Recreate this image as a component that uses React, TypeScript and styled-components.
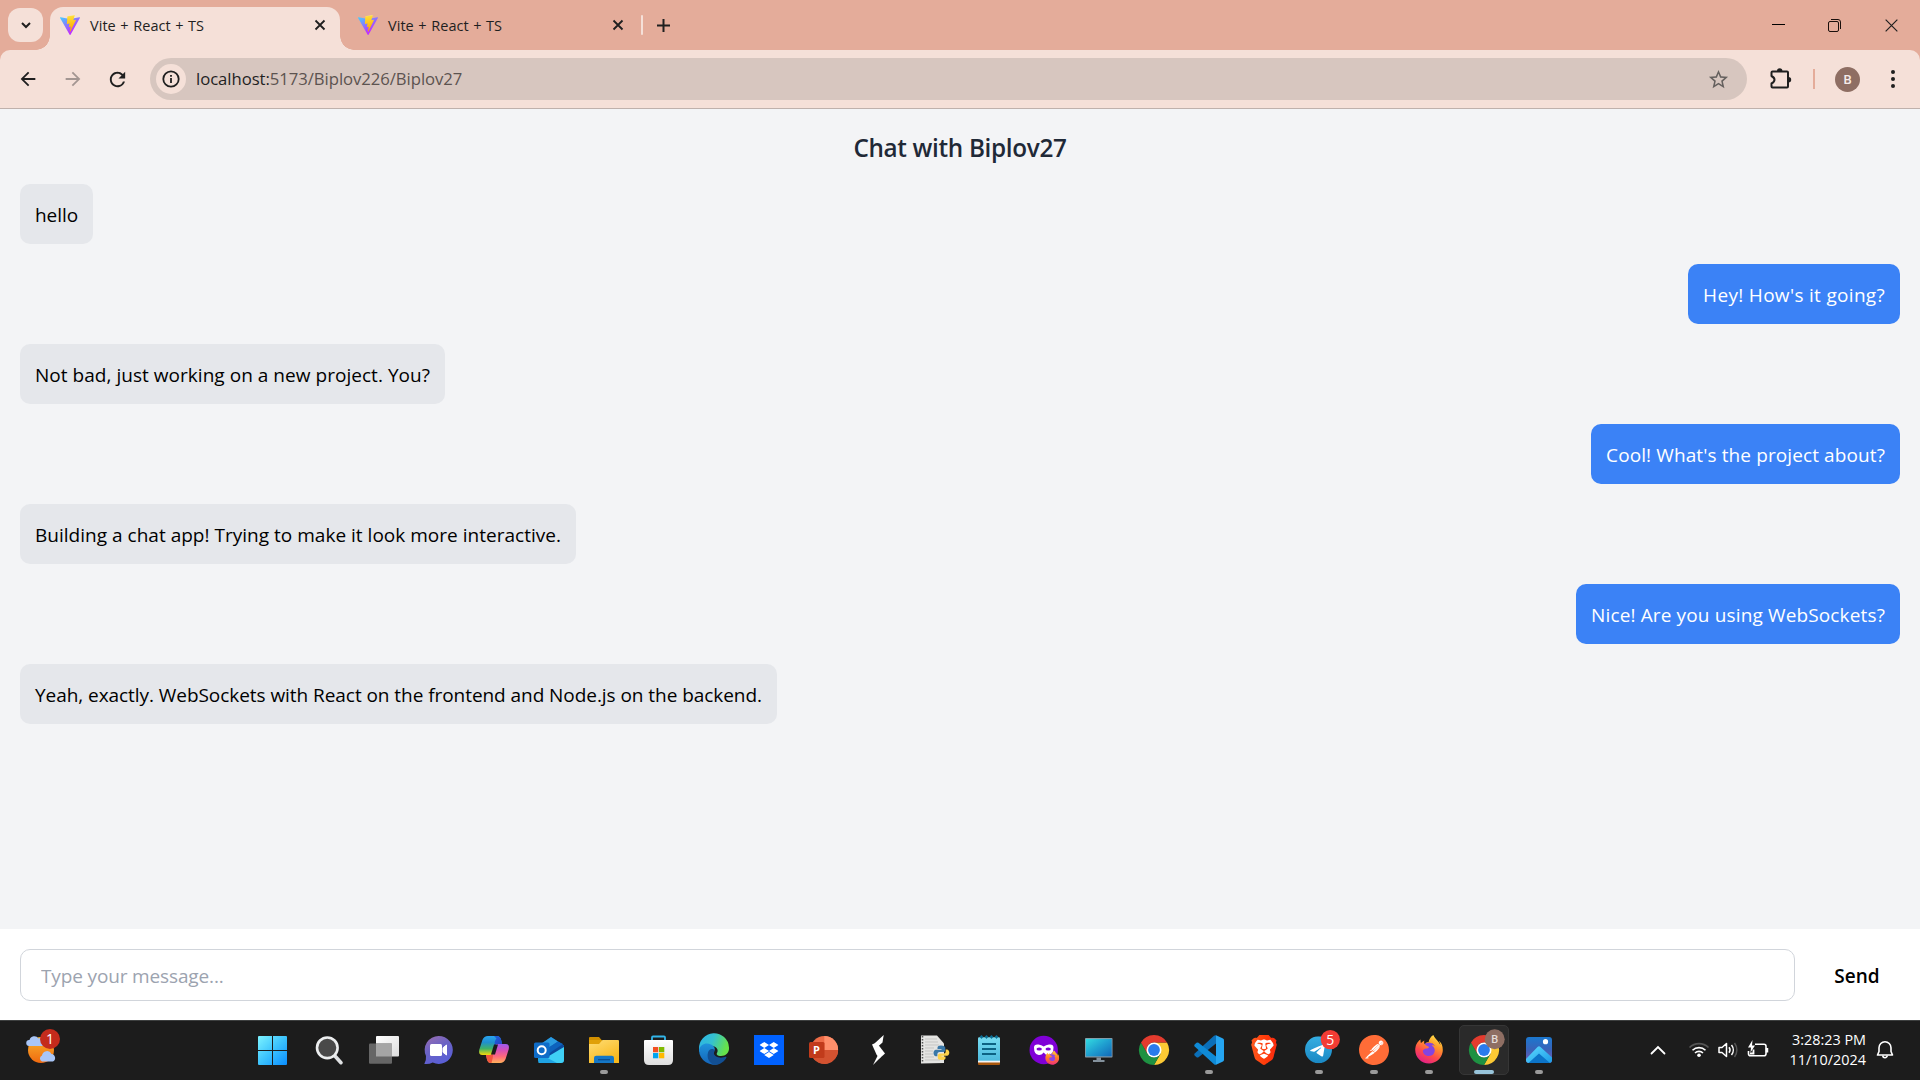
import React from 'react';
import styled, { createGlobalStyle } from 'styled-components';
import { MdArrowBack, MdArrowForward, MdRefresh, MdStarBorder } from 'react-icons/md';
import { FaDropbox, FaFirefoxBrowser } from 'react-icons/fa';
import { SiBrave, SiPostman, SiTelegram } from 'react-icons/si';

const Global = createGlobalStyle`
  * { box-sizing: border-box; }
  body { margin: 0; overflow: hidden; font-family: "Open Sans", "Noto Sans", sans-serif; }
  button, input { font: inherit; }
`;

const Screen = styled.div`
  display: flex;
  flex-direction: column;
  width: 1920px;
  height: 1080px;
  background: #e4ac9a;
`;

/* ---------- browser frame ---------- */

const TabStrip = styled.div`
  display: flex;
  height: 50px;
  padding-left: 8px;
`;

const IconButton = styled.button<{ $w: number; $color?: string }>`
  display: flex;
  align-items: center;
  justify-content: center;
  flex: none;
  width: ${p => p.$w}px;
  height: 100%;
  padding: 0;
  border: 0;
  background: none;
  color: ${p => p.$color ?? '#1f1f1f'};
`;

const TabSearch = styled(IconButton)`
  height: 34px;
  margin: 8px 7px 0 0;
  border-radius: 12px;
  background: #f5e0d8;
`;

const Tab = styled.div<{ $active?: boolean }>`
  position: relative;
  display: flex;
  align-items: center;
  width: ${p => (p.$active ? 290 : 301)}px;
  height: 43px;
  margin-top: 7px;
  padding: 0 ${p => (p.$active ? 10 : 13)}px 7px ${p => (p.$active ? 10 : 18)}px;
  border-radius: 13px 13px 0 0;
  background: ${p => (p.$active ? '#f5e0d8' : 'none')};
  &::before, &::after {
    content: ${p => (p.$active ? "''" : 'none')};
    position: absolute;
    bottom: 0;
    width: 14px;
    height: 14px;
  }
  &::before {
    left: -14px;
    background: radial-gradient(circle at 0 0, transparent 13.5px, #f5e0d8 14px);
  }
  &::after {
    right: -14px;
    background: radial-gradient(circle at 100% 0, transparent 13.5px, #f5e0d8 14px);
  }
`;

const TabTitle = styled.span`
  flex: 1;
  margin-left: 10px;
  padding-top: 1px;
  font-size: 14.5px;
  line-height: 20px;
  letter-spacing: 0.05px;
  word-spacing: 0.7px;
  white-space: nowrap;
  color: #1f1f1f;
`;

const TabDivider = styled.span`
  width: 2px;
  height: 20px;
  margin-top: 15px;
  border-radius: 1px;
  background: #f5e0d8;
`;

const WindowControls = styled.div`
  display: flex;
  margin-left: auto;
`;

const Toolbar = styled.div`
  display: flex;
  align-items: center;
  height: 59px;
  border-bottom: 1px solid #bfb1ac;
  border-radius: 10px 10px 0 0;
  background: #f5e0d8;
`;

const NavButtons = styled.div`
  display: flex;
  flex: none;
  height: 100%;
  width: 150px;
  padding-left: 5px;
`;

const AddressBar = styled.div`
  display: flex;
  align-items: center;
  flex: none;
  width: 1597px;
  height: 42px;
  padding: 0 14px 0 6px;
  border-radius: 21px;
  background: #d7c6bf;
`;

const SiteInfo = styled.span`
  display: flex;
  align-items: center;
  justify-content: center;
  width: 30px;
  height: 30px;
  border-radius: 50%;
  background: #f5e0d8;
`;

const Url = styled.span`
  flex: 1;
  margin-left: 10px;
  font-size: 16.7px;
  line-height: 24px;
  letter-spacing: -0.05px;
  color: #5c5350;
`;

const Host = styled.span`
  color: #1f1f1f;
`;

const ToolbarDivider = styled.span`
  flex: none;
  width: 2px;
  height: 20px;
  margin-right: 20px;
  background: #e4ac9a;
`;

const Avatar = styled.span`
  display: flex;
  align-items: center;
  justify-content: center;
  flex: none;
  width: 25px;
  height: 25px;
  margin-right: 5px;
  border-radius: 50%;
  background: #8e6e63;
  color: #f5ece9;
  font: 500 13px Roboto, sans-serif;
`;

/* ---------- chat page ---------- */

const ChatPage = styled.main`
  display: flex;
  flex-direction: column;
  height: 911px;
  background: #f3f4f6;
`;

const ChatTitle = styled.h2`
  margin: 20px 0 0;
  font-size: 24.3px;
  font-weight: 600;
  line-height: 38px;
  letter-spacing: -0.33px;
  text-align: center;
  color: #1f2937;
`;

const MessageList = styled.div`
  display: flex;
  flex: 1;
  flex-direction: column;
  gap: 20px;
  padding: 17px 20px 0;
`;

const Bubble = styled.div<{ $mine: boolean; $track: number }>`
  align-self: ${p => (p.$mine ? 'flex-end' : 'flex-start')};
  height: 60px;
  padding: 16px 15px 14px;
  border-radius: 10px;
  font-size: 19px;
  line-height: 30px;
  letter-spacing: ${p => p.$track}px;
  white-space: nowrap;
  color: ${p => (p.$mine ? '#fff' : '#000')};
  background: ${p => (p.$mine ? '#3b82f6' : '#e5e7eb')};
`;

const Composer = styled.form`
  display: flex;
  align-items: center;
  height: 91px;
  padding: 0 20px 0;
  background: #fff;
`;

const MessageInput = styled.input`
  width: 1775px;
  height: 52px;
  padding: 2px 20px 0;
  border: 1px solid #d1d5db;
  border-radius: 10px;
  font-size: 19px;
  letter-spacing: -0.14px;
  background: #fff;
  &::placeholder { color: #9ca3af; opacity: 1; }
`;

const SendButton = styled.button`
  flex: 1;
  padding: 2px 0 0 19px;
  border: 0;
  background: none;
  font-size: 19px;
  font-weight: 600;
  color: #000;
`;

/* ---------- taskbar ---------- */

const TaskbarRoot = styled.footer`
  display: flex;
  height: 60px;
  border-top: 1px solid #3d3f3f;
  background: #1c1c1c;
`;

const Widgets = styled.div`
  width: 246.5px;
  padding: 6px 0 0 20px;
`;

const AppCell = styled.div`
  display: flex;
  justify-content: center;
  width: 55px;
  height: 59px;
`;

const AppTile = styled.div<{ $active?: boolean }>`
  display: flex;
  flex-direction: column;
  align-items: center;
  justify-content: space-between;
  width: 50px;
  height: 50px;
  margin-top: 4px;
  padding: 9px 0 0;
  border: 1px solid ${p => (p.$active ? '#363636' : 'transparent')};
  border-radius: 5px;
  background: ${p => (p.$active ? '#2a2a2a' : 'none')};
`;

const Indicator = styled.span<{ $active?: boolean }>`
  width: ${p => (p.$active ? 20 : 8)}px;
  height: 4px;
  border-radius: 2px;
  background: ${p => (p.$active ? '#98c4da' : '#9a9a9a')};
`;

const Glyph = styled.svg`
  display: block;
  overflow: visible;
`;

const Tray = styled.div`
  display: flex;
  align-items: center;
  margin-left: auto;
  padding: 0 25px 1px 0;
`;

const StatusIcons = styled.div`
  display: flex;
  gap: 8px;
  margin: 0 7px 0 16px;
`;

const Clock = styled.div`
  width: 90px;
  margin-right: 9px;
  text-align: right;
  font-size: 14.4px;
  line-height: 20px;
  white-space: nowrap;
  color: #fff;
`;

/* ---------- drawings ---------- */

const ViteLogo = () => (
  <Glyph width="20" height="20" viewBox="0 0 256 257">
    <defs>
      <linearGradient id="vite-a" x1="0" x2=".58" y1="0" y2=".8">
        <stop offset="0" stopColor="#41D1FF" /><stop offset="1" stopColor="#BD34FE" />
      </linearGradient>
      <linearGradient id="vite-b" x1=".43" x2=".5" y1=".02" y2=".9">
        <stop offset="0" stopColor="#FFEA83" /><stop offset=".08" stopColor="#FFDD35" /><stop offset="1" stopColor="#FFA800" />
      </linearGradient>
    </defs>
    <path fill="url(#vite-a)" d="M255.153 37.938L134.897 252.976c-2.483 4.44-8.862 4.466-11.382.048L.875 37.958c-2.746-4.814 1.371-10.646 6.827-9.67l120.385 21.517a6.537 6.537 0 0 0 2.322-.004l117.867-21.483c5.438-.991 9.574 4.796 6.877 9.62Z" />
    <path fill="url(#vite-b)" d="M185.432.063L96.44 17.501a3.268 3.268 0 0 0-2.634 3.014l-5.474 92.456a3.268 3.268 0 0 0 3.997 3.378l24.777-5.718c2.318-.535 4.413 1.507 3.936 3.838l-7.361 36.047c-.495 2.426 1.782 4.5 4.151 3.78l15.304-4.649c2.372-.72 4.652 1.36 4.15 3.788l-11.698 56.621c-.732 3.542 3.979 5.473 5.943 2.437l1.313-2.028l72.516-144.72c1.215-2.423-.88-5.186-3.54-4.672l-25.505 4.922c-2.396.462-4.435-1.77-3.759-4.114l16.646-57.705c.677-2.35-1.37-4.583-3.769-4.113Z" />
  </Glyph>
);

const Cross = ({ size = 10, width = 1.8 }) => (
  <Glyph width={size} height={size} viewBox="0 0 10 10">
    <path d="M.5 .5 9.5 9.5M9.5 .5 .5 9.5" stroke="#1f1f1f" strokeWidth={width} fill="none" />
  </Glyph>
);

const ChromeMark = () => (
  <>
    <path d="M15 7.5H28A15 15 0 0 1 15 30L21.5 18.8Z" fill="#fcc934" />
    <path d="M15 30A15 15 0 0 1 2 7.5L8.5 18.8Q11 22.5 15 22.5 19 22.5 21.5 18.8Z" fill="#1e9142" />
    <path d="M2 7.5A15 15 0 0 1 28 7.5H15Q10.5 7.5 8.5 11.3V18.8Z" fill="#e33b2e" />
    <circle cx="15" cy="15" r="7.5" fill="#fff" />
    <circle cx="15" cy="15" r="5.9" fill="#2a7bec" />
  </>
);

const Grad = ({ id, stops, x2 = '0', y2 = '1', x1 = '0', y1 = '0' }: { id: string; stops: string[]; x1?: string; y1?: string; x2?: string; y2?: string }) => (
  <linearGradient id={id} x1={x1} y1={y1} x2={x2} y2={y2}>
    {stops.map((c, i) => <stop key={i} offset={i / (stops.length - 1)} stopColor={c} />)}
  </linearGradient>
);

const badgeText = { textAnchor: 'middle' as const, fill: '#fff' };

const apps: { name: string; open?: boolean; active?: boolean; art: React.ReactNode }[] = [
  { name: 'Start', art: <>
    <Grad id="win" stops={['#7df3ff', '#3cc3fd', '#0a8dff']} x2="1" />
    <mask id="winm"><path fill="#fff" d="M-1 2q0-1 1-1h13v14H-1zM14 1h13q1 0 1 1v13H14zM-1 16h14v14H0q-1 0-1-1zM14 16h14v13q0 1-1 1H14z" /></mask>
    <rect x="-1" y="1" width="29" height="29" fill="url(#win)" mask="url(#winm)" /></> },
  { name: 'Search', art: <>
    <path d="M20.5 20.5 27 27.7" stroke="#dfe1e3" strokeWidth="3.6" strokeLinecap="round" />
    <circle cx="13.3" cy="12.8" r="10.3" fill="#494949" stroke="#eceeef" strokeWidth="2.6" /></> },
  { name: 'Task View', art: <>
    <Grad id="tv" stops={['#ffffff', '#dcdcdc']} x2="1" />
    <rect x="7" y="1" width="23" height="20.5" rx="1" fill="url(#tv)" />
    <rect x="0" y="8.5" width="23" height="20.3" rx="1" fill="#666" />
    <path d="M7 8.5h16v13H7z" fill="#a5a5a5" /></> },
  { name: 'Chat', art: <>
    <Grad id="chat" stops={['#9d6fb0', '#6b62c4', '#5a5fd6']} x2=".5" />
    <path d="M14.7 1a14 14 0 1 1-6 26.6Q5 29.5.3 29 2.5 25 2 21A14 14 0 0 1 14.7 1z" fill="url(#chat)" />
    <rect x="6" y="9" width="12" height="12" rx="1.5" fill="#fff" />
    <path d="M19 12.8 22.5 10v10L19 17.3z" fill="#fff" stroke="#fff" strokeLinejoin="round" /></> },
  { name: 'Copilot', art: <>
    <Grad id="cpa" stops={['#2aa4ef', '#1f8fd0', '#3fb266', '#f5d90a']} />
    <Grad id="cpb" stops={['#9d5bf0', '#d84fb5', '#ff6a7a', '#ffb25a']} />
    <Grad id="cpc" stops={['#1c62d8', '#2a3fc4']} x2="1" />
    <path d="M9 1h9q3 0 4 3.5L23 8.5h-4q-2.5 0-3.3 2.500L13 20H3.5Q-.8 20 .2 15L3.4 5Q5 1 9 1z" fill="url(#cpa)" />
    <path d="M15 1h3q3 0 4 3.5L23.2 9H19q-2.5 0-3.3 2.5Q15 6 17.5 3.5z" fill="url(#cpc)" />
    <path d="M21 28h-9q-3 0-4-3.5L7 20h4q2.5 0 3.3-2.5L17 9h9.500q4.300 0 3.300 5L26.600 24Q25 28 21 28z" fill="url(#cpb)" />
    <path d="M12 28q-3 0-4-3.5L7 20h4q2.5 0 3.3-2.5Q14 24 12.5 28z" fill="#f2553d" />
    <path d="M15 9.500h4L16 19.500h-4z" fill="#1c1c1c" /></> },
  { name: 'Outlook', art: <>
    <path d="M4 11 17 2 30 10.5V25q0 3-3 3H7q-3 0-3-3z" fill="#0f5fb0" />
    <path d="M4 11 17 2 24 6.5 8 17z" fill="#2a9be0" />
    <path d="M24 6.5 30 10.5V13L12 24z" fill="#0b4a9c" />
    <path d="M24 6.5 8 17v6l21-14z" fill="#0d62bd" />
    <path d="M7 28 4 27.500 30 12v13q0 3-3 3z" fill="#3fd0f5" />
    <path d="M4 18l19 10H7q-3 0-3-3z" fill="#1fa3e4" />
    <rect x="0" y="7.5" width="15.5" height="15.5" rx="1.5" fill="#0f6cc8" />
    <circle cx="7.7" cy="15.2" r="4" fill="none" stroke="#fff" strokeWidth="2" /></> },
  { name: 'File Explorer', open: true, art: <>
    <Grad id="fe" stops={['#ffdd75', '#f8b81c']} x2=".6" />
    <path d="M0 3q0-1 1-1h9l3 3.5H0z" fill="#d18f00" /><path d="M0 5h13v5H0z" fill="#e0a008" />
    <path d="M0 9h10l3.5-4H29q1 0 1 1v22H0z" fill="url(#fe)" />
    <path d="M5 28v-5q0-2.3 2.3-2.3h15.4Q25 20.7 25 23v5z" fill="#1577c6" />
    <path d="M9 24.7h12" stroke="#0b4f92" strokeWidth="1.3" /></> },
  { name: 'Store', art: <>
    <Grad id="ms" stops={['#fff', '#dedede']} />
    <path d="M8 6V2.5Q8 1.500 9 1.5h11q1 0 1 1V6" stroke="#32b6ea" strokeWidth="1.8" fill="none" />
    <path d="M0 6q0-1 1-1h27q1 0 1 1v19q0 5-5 5H5q-5 0-5-5z" fill="url(#ms)" />
    <path d="M9 12h5.3v5.3H9z" fill="#f25022" /><path d="M15 12h5.3v5.3H15z" fill="#7fba00" />
    <path d="M9 18h5.3v5.3H9z" fill="#00a4ef" /><path d="M15 18h5.3v5.3H15z" fill="#ffb900" /></> },
  { name: 'Edge', art: <>
    <Grad id="eg" stops={['#2bb3e8', '#35c1d0', '#66e24a']} x2="1" y2=".3" />
    <Grad id="eb" stops={['#1f93dc', '#1464b8']} />
    <path d="M0 14A15 15 0 0 1 30 12.5c.5 5-3.500 8.500-8 8.500-3.500 0-5-1.500-4-3 2-3-.5-7-5-7Q5 10.500 0 17z" fill="url(#eg)" />
    <path d="M0 15C1 9.5 7 7 12 9.5c3 1.500 4.500 4 3.500 6-3-2-6 1.500-4.500 6 1.500 4.500 6 7.500 10 7A15 15 0 0 1 0 15z" fill="url(#eb)" />
    <path d="M9 17.5c1-3 4-5 7-2-1.500 2-1.500 4 .5 5.500 3 2.200 7.500 2 10.500.5q1 .5 0 2C24 28 19 30 15.500 30 10 28 7.500 22.500 9 17.500z" fill="#124f93" /></> },
  { name: 'Dropbox', art: <>
    <rect width="30" height="30" fill="#0061ff" />
    <FaDropbox x={5.5} y={5.5} size={19} color="#fff" /></> },
  { name: 'PowerPoint', art: <>
    <circle cx="15.3" cy="14.8" r="13.8" fill="#ed6c47" />
    <path d="M15.3 1A13.8 13.8 0 0 1 29.1 15H15.3z" fill="#ff8f6b" />
    <path d="M29.1 15A13.8 13.8 0 0 1 3 21.5L15.3 15z" fill="#d35230" />
    <rect x="0" y="7" width="15.5" height="16" rx="1.5" fill="#c13b1b" />
    <text x="7.4" y="19" fontSize="11" fontWeight="700" fontFamily="Open Sans, sans-serif" {...badgeText}>P</text></> },
  { name: 'Bolt', art: <>
    <path d="M19.7 0 18.5 7.5 14 11.5 10.5 8.500z" fill="#fff" />
    <path d="M8 9.5 12.5 7.500 21 18.500 15.500 23.500 12.500 19.500z" fill="#fff" />
    <path d="M14 20 16.5 22.5 9 30z" fill="#fff" /></> },
  { name: 'Python', art: <>
    <path d="M2 .5h16l7 8V28L2 28.5z" fill="#e4e4e2" />
    <path d="M6 4h12M6 7h13M6 10h14M6 13h9M6 16h8M6 19h8M6 22h9M6 25h15" stroke="#c5c5c3" strokeWidth="1" />
    <path d="M3.5 1v27" stroke="#555" strokeWidth="1.5" strokeDasharray="1.5 1.5" />
    <path d="M22 10.5c-3 0-3.500 1-3.500 2.300V14H22.500v.8h-5.500c-1.500 0-2.500 1.300-2.500 3.300s1 3.200 2.300 3.200h1.600v-2c0-1.400 1-2.200 2.300-2.200h3.600c1.200 0 2-1 2-2v-2.300c0-1.300-1.300-2.300-4.300-2.300z" fill="#3a78a8" />
    <path d="M23 25c3 0 3.500-1 3.500-2.300v-1.200h-4v-.8H28c1.500 0 2.300-1.200 2.300-3.100s-1-3.200-2.300-3.200h-1.300v2c0 1.400-1 2.200-2.300 2.200h-3.600c-1.200 0-2 1-2 2v2.100c0 1.300 1.200 2.300 4.200 2.300z" fill="#fdd24b" /></> },
  { name: 'Notepad', art: <>
    <Grad id="np" stops={['#77dcf2', '#4bb8dc']} />
    <path d="M4 3.5q0-1.200 1.200-1.200h19.600Q26 2.300 26 3.500V27H4z" fill="url(#np)" />
    <path d="M4 26.5h22V29q0 1-1 1H5q-1 0-1-1z" fill="#a9570c" /><path d="M4 25.7h22v1.8H4z" fill="#f3f3f3" />
    {[7.5, 12.5, 17.5, 22.5].map(x => <path key={x} d={`M${x - 1.8} 1.8 ${x} 0 ${x + 1.8} 1.8 ${x} 4z`} fill="#0c6e94" />)}
    <path d="M8 9h14M8 14h14M8 19h14" stroke="#0c6283" strokeWidth="1.8" /></> },
  { name: 'Firefox Private', art: <>
    <Grad id="fp" stops={['#ffd43a', '#ff7a2a', '#f0307a']} />
    <circle cx="14.7" cy="15" r="14.2" fill="#8000d7" />
    <path d="M5 12.5Q5 9 9.5 9.500q3 .3 5.200 2 2.300-1.700 5.300-2 4.500-.5 4.500 3 0 7-5 7.500-3 .2-4.800-2.500Q12.500 20.200 9.800 20 5 19.500 5 12.500z" fill="#fff" />
    <ellipse cx="10.2" cy="14" rx="2.7" ry="1.6" fill="#8000d7" /><ellipse cx="19.2" cy="14" rx="2.7" ry="1.6" fill="#8000d7" />
    <circle cx="23" cy="22.7" r="4" fill="#8a45e8" />
    <FaFirefoxBrowser x={16} y={15.5} size={14.5} fill="url(#fp)" /></> },
  { name: 'Remote Desktop', art: <>
    <Grad id="rd" stops={['#33dbe0', '#1f9fd0', '#1268b8']} x2="1" />
    <rect x="1" y="3" width="27.5" height="19.5" rx=".8" fill="#8a9aa5" />
    <rect x="1.8" y="3.9" width="25.9" height="17.5" fill="url(#rd)" />
    <path d="M12.5 22.5h4.500V25h3.500v2h-11.500v-2h3.500z" fill="#84919c" /></> },
  { name: 'Chrome', art: <ChromeMark /> },
  { name: 'VS Code', open: true, art: <>
    <path d="M22 .3V8.5L4.500 22.200q-1 .7-2 0L.7 20.500q-1-1 0-2L20 .8Q21 0 22 .3z" fill="#0b6fb8" />
    <path d="M22 29.7V21.5L4.500 7.800q-1-.7-2 0L.7 9.500q-1 1 0 2L20 29.200Q21 30 22 29.700z" fill="#0f8ad6" />
    <path d="M22 .3 29 3.6Q30 4.100 30 5.300V24.700q0 1.200-1 1.700L22 29.700z" fill="#25a5f1" /></> },
  { name: 'Brave', art: <>
    <Grad id="br" stops={['#ff5a1f', '#ff3d0a', '#fa2a10']} x2="1" y2="0" />
    <path d="M6 4h18l1 8-4 12-6 3-6-3-4-12z" fill="#fff" />
    <SiBrave size={30} fill="url(#br)" /></> },
  { name: 'Telegram', open: true, art: <>
    <Grad id="tg" stops={['#35aee2', '#1a88c4']} />
    <circle cx="14.5" cy="14.8" r="12.5" fill="#fff" />
    <SiTelegram x={1} y={1.3} size={27} fill="url(#tg)" />
    <circle cx="26.3" cy="4.6" r="9.6" fill="#f23c34" />
    <text x="26.3" y="9.7" fontSize="14" fontFamily="Open Sans, sans-serif" {...badgeText}>5</text></> },
  { name: 'Postman', open: true, art: <>
    <circle cx="15" cy="15" r="14" fill="#fff" />
    <SiPostman x={0} y={0} size={30} color="#ff6c37" /></> },
  { name: 'Firefox', open: true, art: <>
    <Grad id="ff" stops={['#ffe84a', '#ff9a2a', '#ff4a4a', '#e01e8a']} x1=".8" x2=".3" />
    <circle cx="15" cy="15.5" r="8" fill="#8444e0" />
    <FaFirefoxBrowser x={.5} y={0} size={29} fill="url(#ff)" /></> },
  { name: 'Chrome profile', open: true, active: true, art: <>
    <ChromeMark />
    <circle cx="25.7" cy="4.2" r="10" fill="#8e6e63" />
    <text x="25.7" y="8.2" fontSize="11" fontWeight="500" fontFamily="Roboto, sans-serif" {...badgeText} fill="#e3dbd8">B</text></> },
  { name: 'Photos', open: true, art: <>
    <Grad id="pa" stops={['#1b78cf', '#3a62b8', '#7a5ab0']} />
    <Grad id="pb" stops={['#5fdcff', '#1b9be8']} x2="1" />
    <rect x="2" y="2" width="26" height="26" rx="3" fill="url(#pa)" />
    <path d="M2 24 13.5 12q1.500-1.500 3 0L28 22.500V25q0 3-3 3H5q-3 0-3-3z" fill="url(#pb)" />
    <path d="M4.5 28 15 18.500 26 28z" fill="#0c74c8" />
    <circle cx="21.5" cy="6.7" r="2.6" fill="#fff" /></> },
];

const BrowserFrame = () => (
  <>
    <TabStrip>
      <TabSearch $w={35}>
        <Glyph width="10" height="7" viewBox="0 0 10 7"><path d="M1 1l4 4 4-4" fill="none" stroke="#1f1f1f" strokeWidth="2" /></Glyph>
      </TabSearch>
      <Tab $active><ViteLogo /><TabTitle>Vite + React + TS</TabTitle><IconButton $w={20}><Cross /></IconButton></Tab>
      <Tab><ViteLogo /><TabTitle>Vite + React + TS</TabTitle><IconButton $w={20}><Cross /></IconButton></Tab>
      <TabDivider />
      <IconButton $w={41}>
        <Glyph width="13" height="13" viewBox="0 0 13 13"><path d="M6.5 0v13M0 6.5h13" stroke="#1f1f1f" strokeWidth="2" /></Glyph>
      </IconButton>
      <WindowControls>
        <IconButton $w={56}><Glyph width="13" height="13"><path d="M0 5.5h13" stroke="#000" /></Glyph></IconButton>
        <IconButton $w={57}>
          <Glyph width="13" height="13" fill="none" stroke="#1a0f0c">
            <rect x=".5" y="2.5" width="10" height="10" rx="1.5" /><path d="M3 .5h7q2.5 0 2.5 2.5v7" />
          </Glyph>
        </IconButton>
        <IconButton $w={57}><Cross size={13} width={.9} /></IconButton>
      </WindowControls>
    </TabStrip>
    <Toolbar>
      <NavButtons>
        <IconButton $w={45}><MdArrowBack size={22} /></IconButton>
        <IconButton $w={45} $color="#a39692"><MdArrowForward size={22} /></IconButton>
        <IconButton $w={45}><MdRefresh size={23} /></IconButton>
      </NavButtons>
      <AddressBar>
        <SiteInfo>
          <Glyph width="18" height="18" viewBox="0 0 18 18">
            <circle cx="9" cy="9" r="7.7" fill="none" stroke="#1f1f1f" strokeWidth="1.8" />
            <path d="M9 8v5M9 5v1.8" stroke="#1f1f1f" strokeWidth="1.8" />
          </Glyph>
        </SiteInfo>
        <Url><Host>localhost:</Host>5173/Biplov226/Biplov27</Url>
        <IconButton $w={30} $color="#65605e"><MdStarBorder size={23} /></IconButton>
      </AddressBar>
      <IconButton $w={66}>
        <Glyph width="20" height="20" viewBox="0 0 20 20">
          <path d="M1.5 3.5Q1.5 2.5 2.5 2.5H17q1 0 1 1V17.500q0 1-1 1H2.500q-1 0-1-1V14.500Q4.500 13 4.500 10.800T1.500 7z" fill="none" stroke="#1f1f1f" strokeWidth="2" strokeLinejoin="round" />
          <path d="M7 2a2.700 2.700 0 0 1 5.400 0zM18.500 8a2.700 2.700 0 0 1 0 5.400z" fill="#1f1f1f" />
        </Glyph>
      </IconButton>
      <ToolbarDivider />
      <Avatar>B</Avatar>
      <IconButton $w={55}>
        <Glyph width="4" height="18" viewBox="0 0 4 18" fill="#1f1f1f"><circle cx="2" cy="2" r="2" /><circle cx="2" cy="9" r="2" /><circle cx="2" cy="16" r="2" /></Glyph>
      </IconButton>
    </Toolbar>
  </>
);

const messages = [
  { text: 'hello', mine: false, track: -0.05 },
  { text: "Hey! How's it going?", mine: true, track: 0.31 },
  { text: 'Not bad, just working on a new project. You?', mine: false, track: 0.035 },
  { text: "Cool! What's the project about?", mine: true, track: 0.107 },
  { text: 'Building a chat app! Trying to make it look more interactive.', mine: false, track: 0.017 },
  { text: 'Nice! Are you using WebSockets?', mine: true, track: 0.141 },
  { text: 'Yeah, exactly. WebSockets with React on the frontend and Node.js on the backend.', mine: false, track: -0.054 },
];

export default function App() {
  return (
    <Screen>
      <Global />
      <BrowserFrame />
      <ChatPage>
        <ChatTitle>Chat with Biplov27</ChatTitle>
        <MessageList>
          {messages.map(m => <Bubble key={m.text} $mine={m.mine} $track={m.track}>{m.text}</Bubble>)}
        </MessageList>
        <Composer>
          <MessageInput placeholder="Type your message..." />
          <SendButton type="button">Send</SendButton>
        </Composer>
      </ChatPage>
      <TaskbarRoot>
        <Widgets>
          <Glyph width="44" height="44" viewBox="20 1027 44 44">
            <Grad id="sun" stops={['#f9b52e', '#f0690f']} />
            <circle cx="41" cy="1050" r="13" fill="url(#sun)" />
            <path d="M29 1046a3 3 0 0 1 .5-6 5 5 0 0 1 9-1.500 4 4 0 0 1 4 7.500z" fill="#a9c6f7" />
            <path d="M42 1061.500a3.200 3.200 0 0 1 0-6 5 5 0 0 1 9.500-1.500 4 4 0 0 1 1.500 7.500z" fill="#a9c6f7" />
            <circle cx="50" cy="1039" r="10" fill="#c42b1c" />
            <text x="50" y="1044" fontSize="14" fontFamily="Open Sans, sans-serif" {...badgeText}>1</text>
          </Glyph>
        </Widgets>
        {apps.map(a => (
          <AppCell key={a.name}>
            <AppTile $active={a.active}>
              <Glyph width="30" height="30" viewBox="0 0 30 30">{a.art}</Glyph>
              {a.open && <Indicator $active={a.active} />}
            </AppTile>
          </AppCell>
        ))}
        <Tray>
          <Glyph width="30" height="20" fill="none" stroke="#fff" strokeWidth="1.8"><path d="M8.5 13.5 15 7l6.500 6.500" strokeLinecap="round" /></Glyph>
          <StatusIcons>
            <Glyph width="20" height="20" fill="none" stroke="#fff" strokeWidth="1.6">
              <path d="M.5 7.5a13.500 13.500 0 0 1 19 0" stroke="#555" />
              <path d="M3.5 10.3a9.300 9.300 0 0 1 13 0M6 13a5.800 5.800 0 0 1 8 0" />
              <circle cx="10" cy="15.3" r="1.8" fill="#fff" stroke="none" />
            </Glyph>
            <Glyph width="22" height="20" fill="none" stroke="#fff" strokeWidth="1.5">
              <path d="M2 7.5h3L9.500 3.500v13L5 12.500H2z" strokeLinejoin="round" />
              <path d="M12 7.3a4.500 4.500 0 0 1 0 5.500M14.500 5a8 8 0 0 1 0 10" />
              <path d="M17.5 3a11.500 11.500 0 0 1 0 14" stroke="#555" />
            </Glyph>
            <Glyph width="22" height="20" fill="none" stroke="#fff" strokeWidth="1.6">
              <path d="M8 4.2h9q2 0 2 2v7.600q0 2-2 2H3.500q-2 0-2-2V11" />
              <path d="M20 8v4.5" strokeWidth="2.5" />
              <path d="M5.5 0 1 7.500h3L3.500 12.500 8 5.500H5z" fill="#fff" stroke="none" />
              <path d="M3 13.500h3.500V9.500" strokeWidth="1.8" />
            </Glyph>
          </StatusIcons>
          <Clock>3:28:23 PM<br />11/10/2024</Clock>
          <Glyph width="20" height="20" fill="none" stroke="#fff" strokeWidth="1.6">
            <path d="M10 1.8a6 6 0 0 0-6 6V11.500L2.500 15h15L16 11.500V7.800a6 6 0 0 0-6-6z" strokeLinejoin="round" /><path d="M7.800 15.500a2.200 2.200 0 0 0 4.400 0" />
          </Glyph>
        </Tray>
      </TaskbarRoot>
    </Screen>
  );
}
